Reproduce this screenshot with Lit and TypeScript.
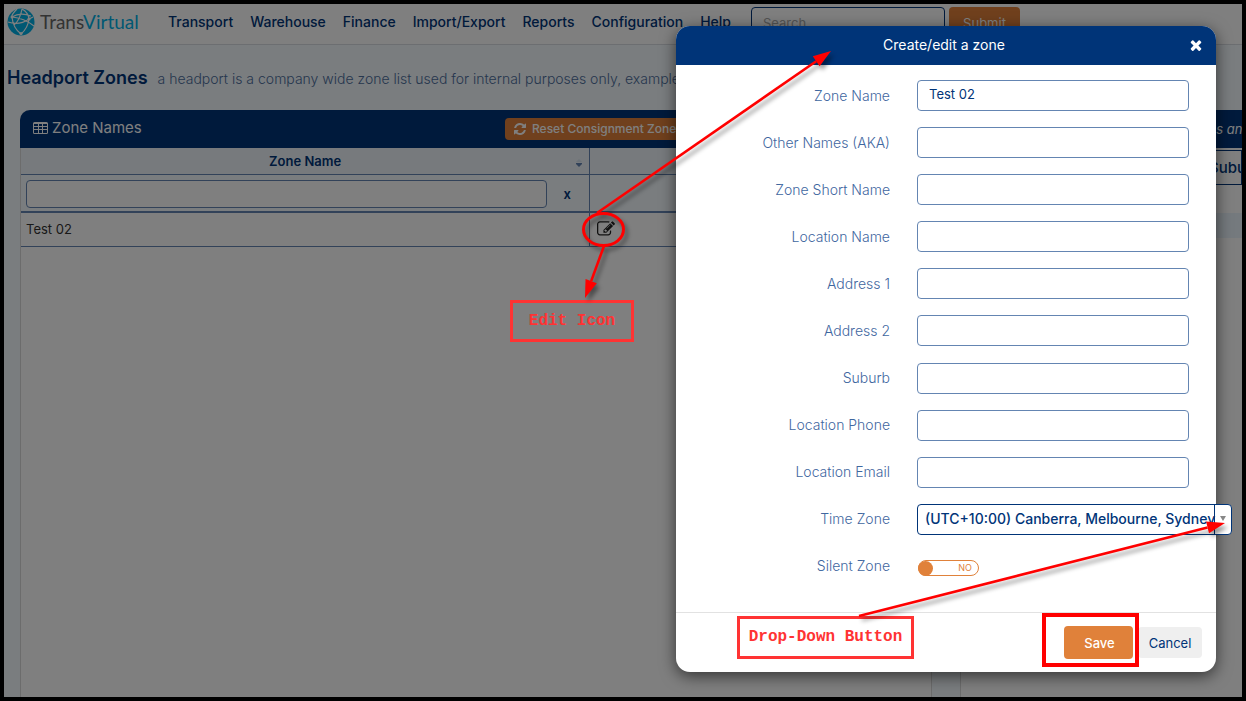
import { LitElement, html, css, svg } from "lit";
import { customElement, state } from "lit/decorators.js";

const TIMES =
  "M1490 1322q0 40-28 68l-136 136q-28 28-68 28t-68-28l-294-294-294 294q-28 28-68 28t-68-28l-136-136q-28-28-28-68t28-68l294-294-294-294q-28-28-28-68t28-68l136-136q28-28 68-28t68 28l294 294 294-294q28-28 68-28t68 28l136 136q28 28 28 68t-28 68l-294 294 294 294q28 28 28 68z";
const REFRESH =
  "M1639 1056q0 5-1 7-64 268-268 434.5t-478 166.5q-146 0-282.5-55t-243.5-157l-129 129q-19 19-45 19t-45-19-19-45v-448q0-26 19-45t45-19h448q26 0 45 19t19 45-19 45l-137 137q71 66 161 102t187 36q134 0 250-65t186-179q11-17 53-117 8-23 30-23h192q13 0 22.5 9.5t9.5 22.5zm25-800v448q0 26-19 45t-45 19h-448q-26 0-45-19t-19-45 19-45l138-138q-148-137-349-137-134 0-250 65t-186 179q-11 17-53 117-8 23-30 23h-199q-13 0-22.5-9.5t-9.5-22.5v-7q65-268 270-434.5t480-166.5q146 0 284 55.5t245 156.5l130-129q19-19 45-19t45 19 19 45z";
const EDIT =
  "M888 1184l116-116-152-152-116 116v56h96v96h56zm440-720q-16-16-33 1l-350 350q-17 17-1 33t33-1l350-350q17-17 1-33zm80 594v190q0 119-84.5 203.5t-203.5 84.5h-832q-119 0-203.5-84.5t-84.5-203.5v-832q0-119 84.5-203.5t203.5-84.5h832q63 0 117 25 15 7 18 23 3 17-9 29l-49 49q-14 14-32 8-23-6-45-6h-832q-66 0-113 47t-47 113v832q0 66 47 113t113 47h832q66 0 113-47t47-113v-126q0-13 9-22l64-64q15-15 35-7t20 29zm-96-738l288 288-672 672h-288v-288zm444 132l-92 92-288-288 92-92q28-28 68-28t68 28l152 152q28 28 28 68t-28 68z";

const NAV = ["Transport", "Warehouse", "Finance", "Import/Export", "Reports", "Configuration", "Help"];

const FIELDS = [
  { id: "zone-name", label: "Zone Name", value: "Test 02" },
  { id: "aka", label: "Other Names (AKA)", value: "" },
  { id: "short-name", label: "Zone Short Name", value: "" },
  { id: "location-name", label: "Location Name", value: "" },
  { id: "address-1", label: "Address 1", value: "" },
  { id: "address-2", label: "Address 2", value: "" },
  { id: "suburb", label: "Suburb", value: "" },
  { id: "phone", label: "Location Phone", value: "" },
  { id: "email", label: "Location Email", value: "" },
];

const faIcon = (d: string) => html`<svg class="fa" viewBox="0 0 1792 1792" aria-hidden="true"><path d=${d} /></svg>`;

@customElement("zones-page")
class ZonesPage extends LitElement {
  static styles = css`
    :host {
      display: flex;
      flex-direction: column;
      flex: 1;
      min-width: 0;
      background: #f4faff;
      color: #003478;
      font: 14px/20px Inter, "Liberation Sans", sans-serif;
    }
    * {
      box-sizing: border-box;
    }
    .fa {
      display: block;
      width: 14px;
      height: 14px;
      fill: currentColor;
    }
    .topbar {
      display: flex;
      align-items: flex-start;
      height: 41px;
      background: #fff;
      border-bottom: 1px solid #d8dde2;
    }
    .logo {
      display: flex;
      align-items: center;
      gap: 5px;
      width: 164px;
      padding: 4px 0 0 3px;
      color: #666;
      line-height: 28px;
      text-decoration: none;
    }
    .logo svg {
      width: 28px;
      height: 28px;
    }
    .brand {
      font-family: Lato, sans-serif;
      font-size: 19px;
    }
    .accent {
      color: #00b0e6;
    }
    .nav {
      display: flex;
      gap: 17px;
      padding-top: 8px;
    }
    .nav a {
      color: #003478;
      font-weight: 500;
      text-decoration: none;
    }
    .search {
      display: flex;
      flex: 1;
      gap: 4px;
      justify-content: flex-end;
      padding: 3px 222px 0 0;
    }
    .search input {
      width: 194px;
      height: 31px;
      padding: 0 11px;
      border: 1px solid #003478;
      border-radius: 4px;
      font: 13px/20px Inter, sans-serif;
    }
    .search input::placeholder {
      color: #a9a9a9;
    }
    .submit {
      width: 71px;
      height: 31px;
      border: 0;
      border-radius: 4px;
      background: #e0813a;
      color: #fff;
      font: 13px/20px Inter, sans-serif;
    }
    .heading {
      display: flex;
      align-items: baseline;
      gap: 10px;
      padding: 21px 0 20px 3px;
      white-space: nowrap;
      overflow: hidden;
    }
    h1 {
      margin: 0;
      font-size: 18px;
      line-height: 24px;
      font-weight: 600;
    }
    .lead {
      margin: 0;
      color: #4d6e9c;
      font-weight: 300;
    }
    .panels {
      display: flex;
      flex: 1;
      gap: 28px;
      padding-left: 16px;
    }
    .panel {
      background: #fff;
      border-left: 1px solid #d8d8d8;
    }
    .main {
      flex: 1;
      min-width: 0;
      border-right: 1px solid #d8d8d8;
      border-radius: 10px 10px 0 0;
    }
    .side {
      width: 282px;
      overflow: hidden;
      white-space: nowrap;
      border-radius: 10px 0 0 0;
    }
    .head {
      display: flex;
      align-items: center;
      height: 38px;
      margin-left: -1px;
      padding-left: 13px;
      background: #003478;
      border-radius: 10px 10px 0 0;
      color: #fff;
    }
    .head h2 {
      display: flex;
      align-items: center;
      gap: 4px;
      width: 472px;
      margin: 0;
      padding-bottom: 2px;
      font-size: 15px;
      line-height: 20px;
      font-weight: 400;
    }
    .grid-icon {
      width: 15px;
      height: 12px;
    }
    .reset {
      display: flex;
      align-items: center;
      gap: 5px;
      height: 22px;
      padding: 0 8px;
      border: 0;
      border-radius: 4px;
      background: #e0813a;
      color: #fff;
      font: 500 12px/20px Inter, sans-serif;
    }
    table {
      width: 100%;
      border-collapse: collapse;
      table-layout: fixed;
    }
    .name-col {
      width: 62.5%;
    }
    th {
      height: 26px;
      padding: 0;
      background: #eef5fb;
      border-bottom: 1px solid #6485b2;
      font-size: 13px;
      font-weight: 600;
    }
    .sortable {
      display: grid;
      grid-template-columns: 20px 1fr 20px;
      align-items: center;
    }
    .sortable span {
      grid-column: 2;
    }
    .sort {
      width: 6px;
      height: 10px;
      margin: 4px 0 0 7px;
      fill: #6485b2;
    }
    td {
      padding: 0 5px;
    }
    .split {
      border-right: 1px solid #6485b2;
    }
    .filter td {
      height: 38px;
      padding-top: 2px;
      background: #f4faff;
      border-bottom: 2px solid #6485b2;
    }
    .filter-cell {
      display: flex;
      align-items: center;
      gap: 10px;
    }
    .filter-cell input {
      flex: 1;
      height: 28px;
      border: 1px solid #6485b2;
      border-radius: 4px;
      background: #fff;
    }
    .clear {
      width: 20px;
      margin-right: 7px;
      padding: 0;
      border: 0;
      background: none;
      color: #003478;
      font: 600 13px/20px Inter, sans-serif;
    }
    .data td {
      height: 34px;
      border-bottom: 1px solid #6485b2;
      color: #333;
      font-size: 13px;
      font-weight: 400;
    }
    .edit {
      display: block;
      margin-left: 2px;
      padding: 0;
      border: 0;
      background: none;
      color: #222;
    }
    .edit .fa {
      width: 18px;
      height: 18px;
    }
    .side .head {
      padding-left: 225px;
      border-radius: 10px 0 0 0;
      font-size: 13px;
      font-style: italic;
    }
    .side .bar {
      height: 35px;
      margin-top: 2px;
      padding-left: 247px;
      border: 1px solid #003478;
      font-size: 15px;
      line-height: 33px;
      font-weight: 500;
    }
    .side .stripe {
      height: 25px;
      margin-top: 28px;
      background: #eaf4fc;
    }
  `;

  render() {
    return html`
      <header class="topbar">
        <a class="logo" href="#" aria-label="TransVirtual">
          <svg viewBox="0 0 28 28" aria-hidden="true">
            <circle cx="14" cy="14" r="13.5" fill="#00b0e6" />
            <g fill="none" stroke="#fff" stroke-width="1.2">
              <path d="M5 9Q13 4 24 8M10 1Q4 7 5 9Q6 20 14 26M5 9Q17 10 27 18M22 11Q21 20 14 26M1 14Q12 18 22 11M15 1Q21 4 22 11L26 9M7 17Q13 12 15 1" />
            </g>
            <g fill="#fff">
              <circle cx="22" cy="11" r="1.6" />
              <circle cx="5" cy="9" r="1.5" />
              <circle cx="14" cy="25.500" r="1.6" />
            </g>
          </svg>
          <span class="brand">Trans<span class="accent">Virtual</span></span>
        </a>
        <nav class="nav">${NAV.map((n) => html`<a href="#">${n}</a>`)}</nav>
        <form class="search">
          <input type="text" placeholder="Search" aria-label="Search" />
          <button class="submit" type="button">Submit</button>
        </form>
      </header>
      <div class="heading">
        <h1>Headport Zones</h1>
        <p class="lead">a headport is a company wide zone list used for internal purposes only, example a</p>
      </div>
      <div class="panels">
        <section class="panel main">
          <div class="head">
            <h2>
              <svg class="grid-icon" viewBox="0 0 15 12" aria-hidden="true">
                <path
                  fill="#fff"
                  fill-rule="evenodd"
                  d="M1.500 0h12A1.500 1.500 0 0 1 15 1.500v9a1.500 1.500 0 0 1-1.500 1.500h-12A1.500 1.500 0 0 1 0 10.500v-9A1.500 1.500 0 0 1 1.500 0zM1 2v2h4V2zM6 2v2h3V2zM10 2v2h4V2zM1 5v2h4V5zM6 5v2h3V5zM10 5v2h4V5zM1 8v3h4V8zM6 8v3h3V8zM10 8v3h4V8z"
                />
              </svg>
              Zone Names
            </h2>
            <button class="reset" type="button">${faIcon(REFRESH)} Reset Consignment Zones</button>
          </div>
          <table>
            <colgroup>
              <col class="name-col" />
              <col />
            </colgroup>
            <thead>
              <tr>
                <th class="split">
                  <div class="sortable">
                    <span>Zone Name</span>
                    <svg class="sort" viewBox="0 0 6 10" aria-hidden="true">
                      <path d="M0 5h6v1L3 9 0 6z" />
                      <path d="M0 4l3-3 3 3z" opacity=".15" />
                    </svg>
                  </div>
                </th>
                <th></th>
              </tr>
            </thead>
            <tbody>
              <tr class="filter">
                <td class="split">
                  <div class="filter-cell">
                    <input type="text" aria-label="Filter zone name" />
                    <button class="clear" type="button">x</button>
                  </div>
                </td>
                <td></td>
              </tr>
              <tr class="data">
                <td class="split">Test 02</td>
                <td><button class="edit" type="button" aria-label="Edit">${faIcon(EDIT)}</button></td>
              </tr>
            </tbody>
          </table>
        </section>
        <section class="panel side">
          <div class="head">Zones and</div>
          <div class="bar">Suburb</div>
          <div class="stripe"></div>
        </section>
      </div>
    `;
  }
}

@customElement("zone-dialog")
class ZoneDialog extends LitElement {
  @state() private silent = false;

  static styles = css`
    :host {
      display: block;
      width: 540px;
      font: 14px/20px Inter, "Liberation Sans", sans-serif;
      color: #003478;
    }
    * {
      box-sizing: border-box;
    }
    .dialog {
      background: #fff;
      border-radius: 14px;
      box-shadow: 0 4px 16px rgba(0, 0, 0, 0.6);
    }
    .title {
      display: grid;
      grid-template-columns: 32px 1fr 32px;
      align-items: center;
      height: 39px;
      padding: 0 4px 2px 0;
      background: #003478;
      border-radius: 14px 14px 0 0;
      color: #fff;
    }
    .title h2 {
      grid-column: 2;
      margin: 0;
      font-size: 14px;
      font-weight: 400;
      text-align: center;
    }
    .close {
      padding: 0 8px;
      border: 0;
      background: none;
      color: #fff;
    }
    .fa {
      display: block;
      width: 16px;
      height: 16px;
      fill: currentColor;
    }
    .fields {
      display: flex;
      flex-direction: column;
      justify-content: space-between;
      height: 548px;
      padding: 15px 27px 30px 0;
      border-bottom: 1px solid #e2e2e2;
    }
    .row {
      display: grid;
      grid-template-columns: 1fr 272px;
      gap: 27px;
      align-items: center;
      height: 31px;
    }
    label {
      color: #3f679f;
      font-weight: 300;
      text-align: right;
    }
    .text {
      height: 31px;
      padding: 0 11px 3px;
      border: 1px solid #6485b2;
      border-radius: 4px;
      background: #fff;
      color: #003478;
      font: 13px/20px Inter, sans-serif;
    }
    .picker {
      display: grid;
      grid-template-columns: 1fr 17px;
      width: 315px;
      height: 31px;
      border: 1px solid #003478;
      border-radius: 4px;
      background: #fff;
    }
    .picker select {
      grid-area: 1 / 1 / 2 / 3;
      width: 100%;
      padding: 0 7px;
      border: 0;
      appearance: none;
      background: none;
      color: #003478;
      font: 500 14px/20px Inter, sans-serif;
    }
    .arrow {
      grid-area: 1 / 2;
      display: flex;
      justify-content: center;
      padding-top: 11px;
      border-left: 1px solid #003478;
      pointer-events: none;
    }
    .arrow svg {
      width: 6px;
      height: 5px;
      fill: #888;
    }
    .switch {
      display: flex;
      align-items: center;
      justify-content: space-between;
      width: 61px;
      height: 16px;
      margin: 4px 0 0 1px;
      padding: 0 6px 0 0;
      border: 1px solid #e0813a;
      border-radius: 8px;
      color: #e0813a;
      font-size: 9px;
      line-height: 14px;
    }
    .switch input {
      width: 15px;
      height: 15px;
      margin: 0 0 0 -1px;
      appearance: none;
      border-radius: 50%;
      background: #e0813a;
    }
    .actions {
      display: flex;
      align-items: center;
      justify-content: flex-end;
      gap: 5px;
      height: 59px;
      padding-right: 14px;
    }
    .actions button {
      height: 31px;
      border: 0;
      border-radius: 4px;
      background: #efefef;
      color: #003478;
      font: 13px/20px Inter, sans-serif;
    }
    .cancel {
      width: 64px;
    }
    .actions .save {
      width: 69px;
      height: 33px;
      padding-left: 8px;
      background: #e0813a;
      color: #fff;
      font-weight: 500;
    }
  `;

  private toggle = () => {
    this.silent = !this.silent;
  };

  render() {
    return html`
      <div class="dialog" role="dialog" aria-label="Create/edit a zone">
        <header class="title">
          <h2>Create/edit a zone</h2>
          <button class="close" type="button" aria-label="Close">${faIcon(TIMES)}</button>
        </header>
        <div class="fields">
          ${FIELDS.map(
            (f) => html`
              <div class="row">
                <label for=${f.id}>${f.label}</label>
                <input class="text" type="text" id=${f.id} .value=${f.value} />
              </div>
            `
          )}
          <div class="row">
            <label for="time-zone">Time Zone</label>
            <div class="picker">
              <select id="time-zone">
                <option>(UTC+10:00) Canberra, Melbourne, Sydney</option>
              </select>
              <span class="arrow"><svg viewBox="0 0 6 5" aria-hidden="true"><path d="M0 0h6L3 5z" /></svg></span>
            </div>
          </div>
          <div class="row">
            <label for="silent">Silent Zone</label>
            <div class="switch">
              <input type="checkbox" id="silent" .checked=${this.silent} @change=${this.toggle} />
              <span>${this.silent ? "YES" : "NO"}</span>
            </div>
          </div>
        </div>
        <footer class="actions">
          <button class="save" type="button">Save</button>
          <button class="cancel" type="button">Cancel</button>
        </footer>
      </div>
    `;
  }
}

@customElement("app-root")
class AppRoot extends LitElement {
  static styles = css`
    :host {
      display: flex;
      position: relative;
      box-sizing: border-box;
      min-height: 100vh;
      border: 4px solid #000;
      overflow: hidden;
    }
    .overlay {
      position: absolute;
      inset: 0;
      display: flex;
      align-items: flex-start;
      justify-content: flex-end;
      padding: 22px 26px;
      background: rgba(0, 0, 0, 0.5);
    }
    .marks {
      position: absolute;
      top: -4px;
      left: -4px;
      width: 1246px;
      height: 701px;
      pointer-events: none;
    }
    .lines {
      filter: drop-shadow(3px 4px 2px rgba(0, 0, 0, 0.4));
    }
    .note {
      position: absolute;
      box-sizing: border-box;
      border: 3px solid #ff3333;
      color: #ff3333;
      font: bold 16px/37px "Liberation Mono", monospace;
      text-align: center;
      white-space: nowrap;
    }
    .note-edit {
      top: 296px;
      left: 506px;
      width: 124px;
      height: 42px;
    }
    .note-drop {
      top: 612px;
      left: 733px;
      width: 177px;
      height: 43px;
      background: #fff;
    }
  `;

  /* Line with a filled head whose tip lies on (x2, y2). */
  private arrow(x1: number, y1: number, x2: number, y2: number) {
    const length = Math.hypot(x2 - x1, y2 - y1);
    const ux = (x2 - x1) / length;
    const uy = (y2 - y1) / length;
    const bx = x2 - ux * 18;
    const by = y2 - uy * 18;
    const nx = -uy * 6;
    const ny = ux * 6;
    return svg`
      <path d="M${x1} ${y1}L${bx} ${by}" stroke="#f00" stroke-width="2.6" />
      <path d="M${x2} ${y2}L${bx + nx} ${by + ny}L${bx - nx} ${by - ny}z" fill="#f00" />
    `;
  }

  render() {
    return html`
      <zones-page></zones-page>
      <div class="overlay"><zone-dialog></zone-dialog></div>
      <div class="note note-edit">Edit Icon</div>
      <div class="note note-drop">Drop-Down Button</div>
      <svg class="marks" viewBox="0 0 1246 701" aria-hidden="true">
        <g class="lines">
          <ellipse cx="603.500" cy="229.500" rx="20" ry="16" fill="none" stroke="#f00" stroke-width="3" />
          ${this.arrow(597, 213, 831, 51)} ${this.arrow(604, 246, 585, 298)} ${this.arrow(859, 616, 1225, 523)}
        </g>
        <rect x="1044" y="615" width="93" height="50" fill="none" stroke="#f00" stroke-width="4" />
      </svg>
    `;
  }
}
